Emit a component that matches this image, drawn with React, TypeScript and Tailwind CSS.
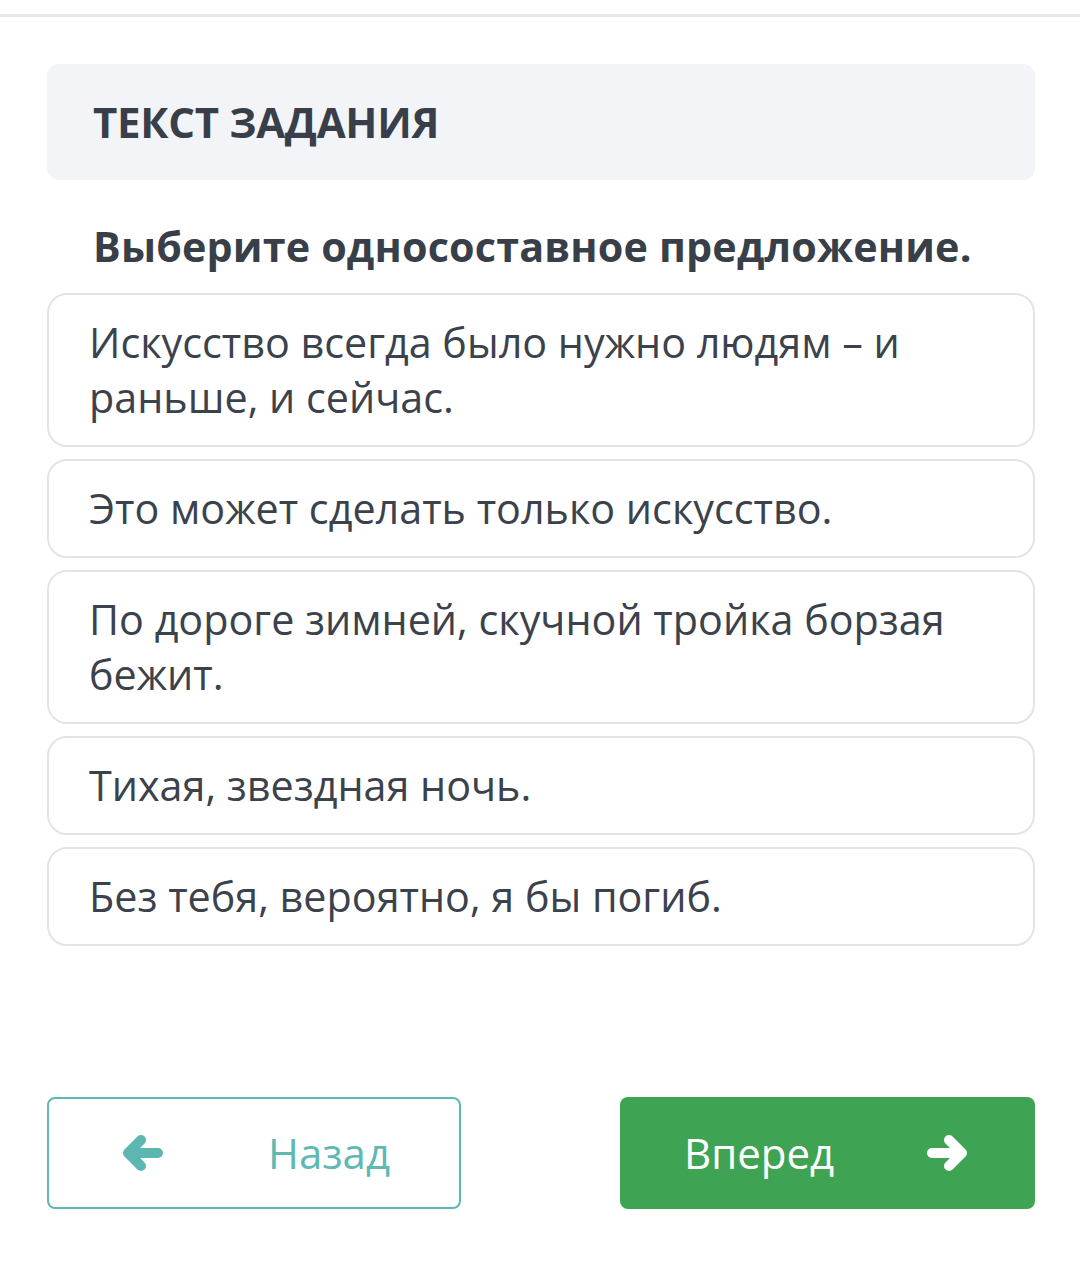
import React from "react"

const options = [
  "Искусство всегда было нужно людям – и раньше, и сейчас.",
  "Это может сделать только искусство.",
  "По дороге зимней, скучной тройка борзая бежит.",
  "Тихая, звездная ночь.",
  "Без тебя, вероятно, я бы погиб.",
]

function Arrow({ dir, color }: { dir: "left" | "right"; color: string }) {
  return (
    <svg
      width="42"
      height="38"
      viewBox="0 0 42 38"
      fill="none"
      className={dir === "right" ? "-scale-x-100" : ""}
    >
      <path d="M19 6 L6 19 L19 32" stroke={color} strokeWidth="10" strokeLinecap="round" strokeLinejoin="round" />
      <path d="M8 19 H36" stroke={color} strokeWidth="10" strokeLinecap="round" />
    </svg>
  )
}

export default function App() {
  return (
    <div className="min-h-[1268px] w-[1080px] bg-white font-['Open_Sans',sans-serif]">
      <div className="pt-[14px]">
        <div className="h-[3px] bg-[#e8e8e8]" />
      </div>

      <div className="pl-[47px] pr-[45px]">
        {/* task header */}
        <div className="mt-[47px] flex h-[116px] items-center rounded-[12px] bg-[#f3f4f7] pl-[46px]">
          <h2 className="text-[42px] font-bold leading-none tracking-[-0.3px] text-[#393f49]">ТЕКСТ ЗАДАНИЯ</h2>
        </div>

        <p className="mt-[41px] pl-[46px] text-[41.3px] font-bold leading-[50px] tracking-[0.15px] text-[#393f49]">
          Выберите односоставное предложение.
        </p>

        {/* answers */}
        <div className="mt-[22px] flex flex-col gap-[12px]">
          {options.map((o) => (
            <div
              key={o}
              className="rounded-[20px] border-2 border-[#e4e4e4] py-[20px] pl-[40px] pr-[60px] text-[41.3px] leading-[55px] text-[#3c424c]"
            >
              {o}
            </div>
          ))}
        </div>

        {/* nav */}
        <div className="mt-[151px] flex justify-between">
          <button className="flex h-[112px] w-[414px] items-center rounded-[8px] border-2 border-[#5fb9b3] pl-[73px] text-[#5fb9b3]">
            <Arrow dir="left" color="#5cb7b1" />
            <span className="ml-[104px] text-[42px] leading-none">Назад</span>
          </button>
          <button className="flex h-[112px] w-[415px] items-center rounded-[8px] bg-[#3ea454] pl-[64px] text-white">
            <span className="text-[42px] leading-none">Вперед</span>
            <span className="ml-[92px]">
              <Arrow dir="right" color="#ffffff" />
            </span>
          </button>
        </div>
      </div>
    </div>
  )
}
